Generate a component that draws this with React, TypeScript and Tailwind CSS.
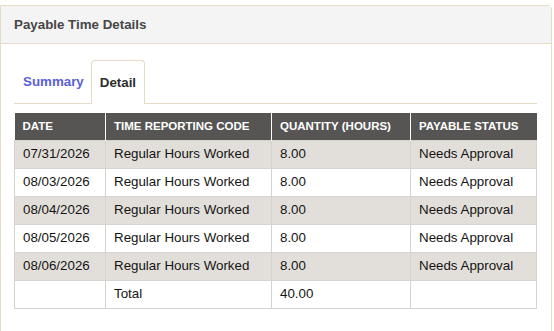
import React from 'react'

const rows = [
  { date: '07/31/2026', code: 'Regular Hours Worked', qty: '8.00', status: 'Needs Approval' },
  { date: '08/03/2026', code: 'Regular Hours Worked', qty: '8.00', status: 'Needs Approval' },
  { date: '08/04/2026', code: 'Regular Hours Worked', qty: '8.00', status: 'Needs Approval' },
  { date: '08/05/2026', code: 'Regular Hours Worked', qty: '8.00', status: 'Needs Approval' },
  { date: '08/06/2026', code: 'Regular Hours Worked', qty: '8.00', status: 'Needs Approval' },
]

export default function App() {
  return (
    <div className="h-[331px] w-[554px] overflow-hidden bg-white pt-[5px] font-['Liberation_Sans',Arial,sans-serif]">
      <div className="h-[400px] w-[552px] rounded-tr-[4px] border border-[#e4dcc5] bg-white">
        {/* panel header */}
        <div className="flex h-[38px] items-center border-b border-[#e4dcc5] bg-[#f4f4f4] pl-[13px] text-[13.33px] font-bold text-[#474747]">
          Payable Time Details
        </div>

        <div className="pl-[13px] pr-[14px] pt-[16px]">
          {/* tabs */}
          <div className="flex h-[44px] border-b border-[#e4dcc5]">
            <div className="flex h-[43px] items-center pl-[9px] pr-[7px] text-[13.33px] font-bold text-[#5a60d8]">Summary</div>
            <div className="-mb-px flex h-[44px] items-center rounded-t-[4px] border border-b-0 border-[#e4dcc5] bg-white px-[8px] text-[13.33px] font-bold text-[#2e2e2e]">
              Detail
            </div>
          </div>

          {/* table */}
          <table className="mt-[9px] w-[522px] table-fixed border-collapse text-[13.33px] text-[#141414]">
            <colgroup>
              <col className="w-[91px]" />
              <col className="w-[166px]" />
              <col className="w-[139px]" />
              <col className="w-[126px]" />
            </colgroup>
            <thead>
              <tr className="bg-[#575553] text-[11.5px] font-bold uppercase text-white">
                <th className="h-[27px] border-r border-white px-[8px] text-left font-bold">Date</th>
                <th className="h-[27px] border-r border-white px-[8px] text-left font-bold">Time Reporting Code</th>
                <th className="h-[27px] border-r border-white px-[8px] text-left font-bold">Quantity (Hours)</th>
                <th className="h-[27px] px-[8px] text-left font-bold">Payable Status</th>
              </tr>
            </thead>
            <tbody>
              {rows.map((r, i) => (
                <tr key={r.date} className={i % 2 === 0 ? 'bg-[#e2dfda]' : 'bg-white'}>
                  <td className="h-[28px] border border-[#d6d3ce] px-[8px]">{r.date}</td>
                  <td className="h-[28px] border border-[#d6d3ce] px-[8px]">{r.code}</td>
                  <td className="h-[28px] border border-[#d6d3ce] px-[8px]">{r.qty}</td>
                  <td className="h-[28px] border border-[#d6d3ce] px-[8px]">{r.status}</td>
                </tr>
              ))}
              <tr className="bg-white">
                <td className="h-[28px] border border-[#d6d3ce] px-[8px]"></td>
                <td className="h-[28px] border border-[#d6d3ce] px-[8px]">Total</td>
                <td className="h-[28px] border border-[#d6d3ce] px-[8px]">40.00</td>
                <td className="h-[28px] border border-[#d6d3ce] px-[8px]"></td>
              </tr>
            </tbody>
          </table>
        </div>
      </div>
    </div>
  )
}
